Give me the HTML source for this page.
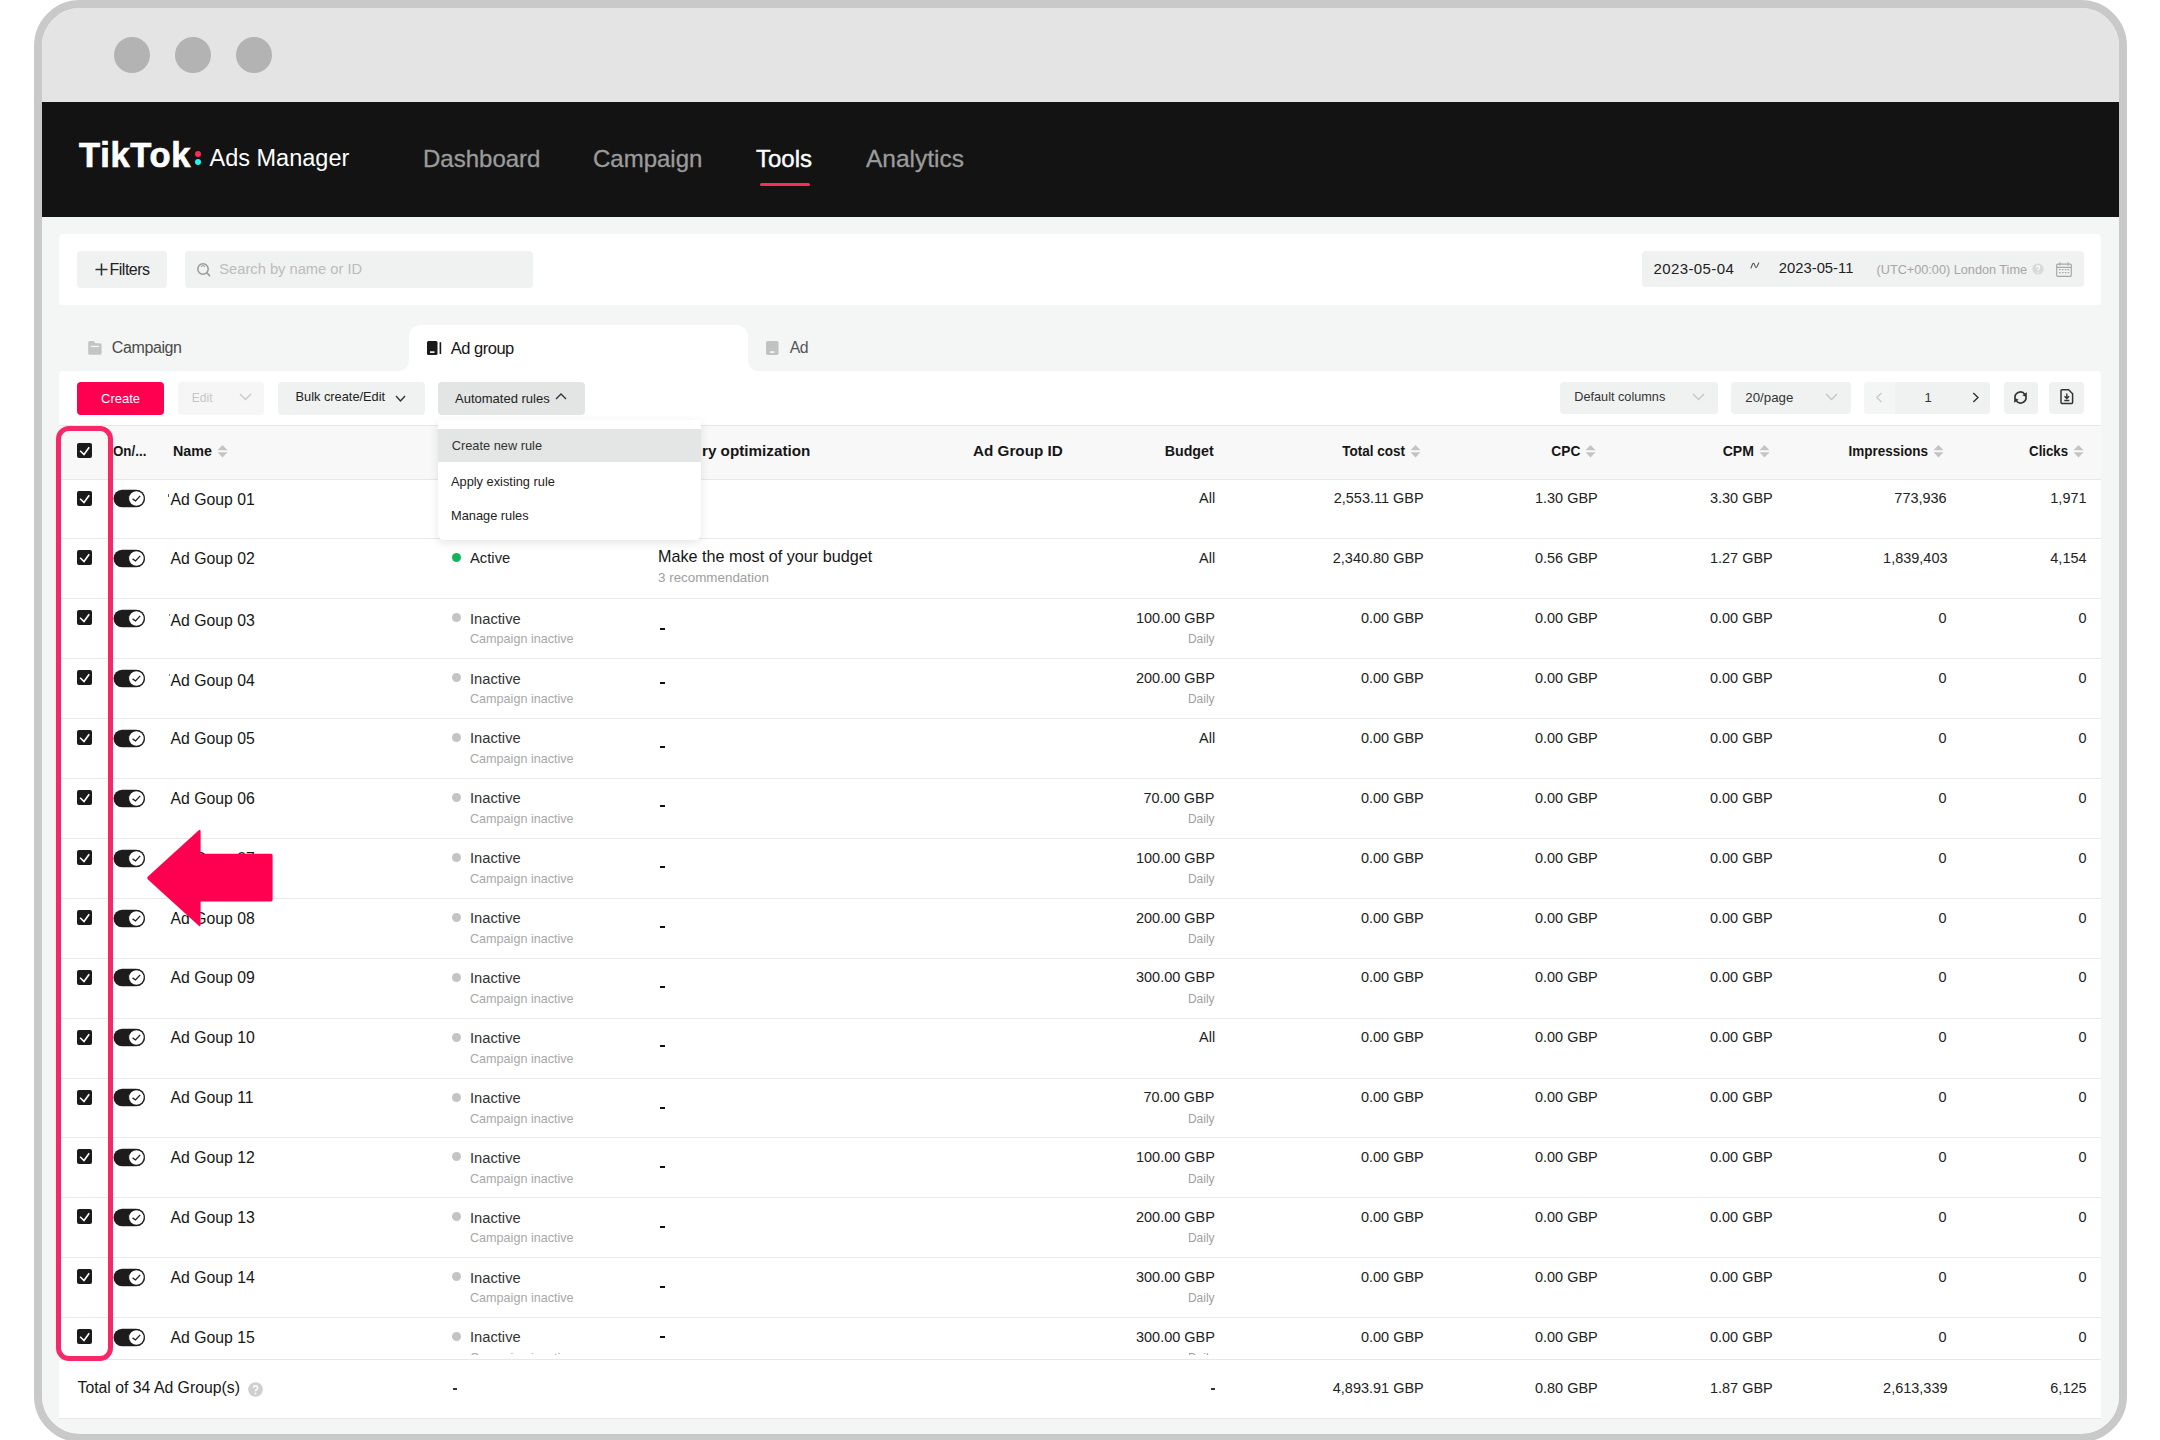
<!DOCTYPE html><html><head><meta charset="utf-8"><title>TikTok Ads Manager</title><style>
*{box-sizing:border-box}
html,body{margin:0;padding:0}
body{width:2160px;height:1440px;background:#fff;position:relative;overflow:hidden;font-family:"Liberation Sans",sans-serif;color:#161616}
.ab{position:absolute}
.t{position:absolute;white-space:nowrap;line-height:1}
.frame{position:absolute;left:34px;top:0;width:2093px;height:1442px;border:8px solid #c9c9c9;border-radius:46px;overflow:hidden;background:#f4f5f5}
.inner{position:absolute;left:-42px;top:-8px;width:2160px;height:1440px}
</style></head><body>
<div class="frame"><div class="inner">
<div class="ab" style="left:0.0px;top:0.0px;width:2160.0px;height:102.0px;background:#e4e4e4;border-radius:0px;"></div>
<div class="ab" style="left:114.0px;top:37.0px;width:36.0px;height:36.0px;background:#b3b3b3;border-radius:18px;"></div>
<div class="ab" style="left:175.0px;top:37.0px;width:36.0px;height:36.0px;background:#b3b3b3;border-radius:18px;"></div>
<div class="ab" style="left:236.0px;top:37.0px;width:36.0px;height:36.0px;background:#b3b3b3;border-radius:18px;"></div>
<div class="ab" style="left:0.0px;top:96.5px;width:2160.0px;height:1.0px;background:#e9e1de;border-radius:0px;"></div>
<div class="ab" style="left:0.0px;top:100.8px;width:2160.0px;height:1.2px;background:#dde6f2;border-radius:0px;"></div>
<div class="ab" style="left:0.0px;top:102.0px;width:2160.0px;height:115.0px;background:#131313;border-radius:0px;"></div>
<div class="t" style="left:79.0px;top:138.3px;font-size:34.5px;color:#fff;font-weight:700;letter-spacing:0.7px;-webkit-text-stroke:0.7px #fff">TikTok</div>
<div class="ab" style="left:195.4px;top:151.0px;width:5.6px;height:5.6px;background:#fe2c55;border-radius:3px;"></div>
<div class="ab" style="left:195.4px;top:159.0px;width:5.6px;height:5.6px;background:#25f4ee;border-radius:3px;"></div>
<div class="t" style="left:209.5px;top:147.0px;font-size:23.5px;color:#fff;font-weight:400;">Ads Manager</div>
<div class="t" style="left:423.0px;top:146.9px;font-size:24px;color:#9b9b9b;font-weight:400;-webkit-text-stroke:0.3px #9b9b9b">Dashboard</div>
<div class="t" style="left:593.0px;top:146.9px;font-size:24px;color:#9b9b9b;font-weight:400;-webkit-text-stroke:0.3px #9b9b9b">Campaign</div>
<div class="t" style="left:756.0px;top:146.9px;font-size:24px;color:#ffffff;font-weight:400;-webkit-text-stroke:0.4px #fff">Tools</div>
<div class="t" style="left:866.0px;top:146.5px;font-size:24.5px;color:#9b9b9b;font-weight:400;-webkit-text-stroke:0.3px #9b9b9b">Analytics</div>
<div class="ab" style="left:759.5px;top:182.5px;width:50.0px;height:3.5px;background:#fe2c55;border-radius:2px;"></div>
<div class="ab" style="left:42.0px;top:217.0px;width:2077.0px;height:1216.0px;background:#f4f5f5;border-radius:0px;"></div>
<div class="ab" style="left:59.0px;top:233.5px;width:2042.0px;height:71.5px;background:#ffffff;border-radius:4px;"></div>
<div class="ab" style="left:77.0px;top:251.0px;width:90.0px;height:37.0px;background:#f0f1f1;border-radius:4px;"></div>
<svg class="ab" style="left:95.0px;top:263.0px;" width="13" height="13" viewBox="0 0 13 13"><path d="M6.5 0.5V12.5M0.5 6.5H12.5" stroke="#333" stroke-width="1.6"/></svg>
<div class="t" style="left:109.5px;top:262.4px;font-size:16px;color:#222;font-weight:400;letter-spacing:-0.5px">Filters</div>
<div class="ab" style="left:185.0px;top:251.0px;width:348.0px;height:37.0px;background:#f0f1f1;border-radius:4px;"></div>
<svg class="ab" style="left:196.0px;top:262.0px;" width="16" height="16" viewBox="0 0 16 16"><circle cx="7" cy="7" r="5.2" fill="none" stroke="#9a9a9a" stroke-width="1.5"/><path d="M10.8 10.8L13.6 13.6" stroke="#9a9a9a" stroke-width="1.5" stroke-linecap="round"/><path d="M5 4.6A2.8 2.8 0 0 1 9 4.6" stroke="#9a9a9a" stroke-width="1.2" fill="none"/></svg>
<div class="t" style="left:219.3px;top:262.1px;font-size:14.7px;color:#bcbcbc;font-weight:400;">Search by name or ID</div>
<div class="ab" style="left:1641.5px;top:251.2px;width:442.5px;height:36.3px;background:#f0f1f1;border-radius:4px;"></div>
<div class="t" style="left:1653.5px;top:261.1px;font-size:15px;color:#222;font-weight:400;letter-spacing:0.4px">2023-05-04</div>
<svg class="ab" style="left:1750.0px;top:262.0px;" width="10" height="7" viewBox="0 0 10 7"><path d="M1 6C2.2 2.6 2.9 1 3.7 1.3C4.6 1.7 5.1 5.6 6.1 5.6C7 5.6 7.9 2.4 8.8 1" fill="none" stroke="#555" stroke-width="1.1" stroke-linecap="round"/></svg>
<div class="t" style="left:1778.8px;top:261.2px;font-size:14.8px;color:#222;font-weight:400;">2023-05-11</div>
<div class="t" style="left:1876.5px;top:263.5px;font-size:12.7px;color:#a6a6a6;font-weight:400;">(UTC+00:00) London Time</div>
<svg class="ab" style="left:2032.0px;top:263.0px;" width="12" height="12" viewBox="0 0 12 12"><circle cx="6" cy="6" r="5.6" fill="#d9d9d9"/><path d="M4.3 4.6A1.7 1.7 0 1 1 6.6 6.2C6.1 6.5 6 6.8 6 7.4" stroke="#fff" stroke-width="1.2" fill="none"/><circle cx="6" cy="9.2" r="0.7" fill="#fff"/></svg>
<svg class="ab" style="left:2056.0px;top:262.0px;" width="16" height="15" viewBox="0 0 16 15"><rect x="0.7" y="2.2" width="14.6" height="12.1" rx="1" fill="none" stroke="#a8a8a8" stroke-width="1.2"/><path d="M0.7 5.3H15.3M4 0.3V3.5M12 0.3V3.5" stroke="#a8a8a8" stroke-width="1.2"/><g fill="#a8a8a8"><rect x="3" y="7" width="1.6" height="1.3"/><rect x="5.9" y="7" width="1.6" height="1.3"/><rect x="8.8" y="7" width="1.6" height="1.3"/><rect x="11.6" y="7" width="1.6" height="1.3"/><rect x="3" y="10" width="1.6" height="1.3"/><rect x="5.9" y="10" width="1.6" height="1.3"/><rect x="8.8" y="10" width="1.6" height="1.3"/><rect x="11.6" y="10" width="1.6" height="1.3"/></g></svg>
<svg class="ab" style="left:88.0px;top:341.0px;" width="14" height="14" viewBox="0 0 14 14"><path d="M0.2 1.6Q0.2 0.1 1.7 0.1H5.2Q6.2 0.1 6.9 1.2L7.3 2.2H12.1Q13.6 2.2 13.6 3.7V12.2Q13.6 13.7 12.1 13.7H1.7Q0.2 13.7 0.2 12.2Z" fill="#c4c4c4"/><rect x="2.8" y="4.8" width="8.1" height="1.3" fill="#f4f5f5"/></svg>
<div class="t" style="left:111.8px;top:339.9px;font-size:16px;color:#4a4a4a;font-weight:400;letter-spacing:-0.4px">Campaign</div>
<div class="ab" style="left:409.0px;top:325.0px;width:339.0px;height:48.0px;background:#ffffff;border-radius:0px;border-radius:12px 12px 0 0"></div>
<svg class="ab" style="left:397.0px;top:359.0px;" width="12" height="12" viewBox="0 0 12 12"><path d="M12 0V12H0Q12 12 12 0Z" fill="#fff"/></svg>
<svg class="ab" style="left:748.0px;top:359.0px;" width="12" height="12" viewBox="0 0 12 12"><path d="M0 0V12H12Q0 12 0 0Z" fill="#fff"/></svg>
<svg class="ab" style="left:427.0px;top:341.0px;" width="15" height="14" viewBox="0 0 15 14"><rect x="0" y="0" width="10.5" height="14" rx="1.5" fill="#1a1a1a"/><rect x="3" y="10.3" width="4.5" height="1.6" fill="#fff"/><rect x="12.6" y="1.2" width="1.6" height="11.8" fill="#1a1a1a"/></svg>
<div class="t" style="left:450.8px;top:339.6px;font-size:16.5px;color:#161616;font-weight:400;letter-spacing:-0.5px">Ad group</div>
<svg class="ab" style="left:766.0px;top:341.0px;" width="13" height="14" viewBox="0 0 13 14"><rect x="0" y="0" width="12.5" height="14" rx="1.8" fill="#c2c2c2"/><rect x="4" y="10.3" width="4.5" height="1.6" fill="#f4f5f5"/></svg>
<div class="t" style="left:789.7px;top:340.2px;font-size:15.8px;color:#555;font-weight:400;letter-spacing:-0.5px">Ad</div>
<div class="ab" style="left:59.0px;top:371.0px;width:2042.0px;height:1047.0px;background:#ffffff;border-radius:4px;"></div>
<div class="ab" style="left:77.0px;top:382.0px;width:87.0px;height:32.5px;background:#ff0050;border-radius:4px;"></div>
<div class="t" style="left:101.0px;top:391.9px;font-size:13px;color:#fff;font-weight:400;">Create</div>
<div class="ab" style="left:177.5px;top:382.0px;width:86.0px;height:32.5px;background:#f6f6f6;border-radius:4px;"></div>
<div class="t" style="left:191.8px;top:392.0px;font-size:12px;color:#c6c6c6;font-weight:400;">Edit</div>
<svg class="ab" style="left:239.0px;top:393.0px;" width="13" height="8" viewBox="0 0 13 8"><path d="M1 1L6.5 6.5L12 1" fill="none" stroke="#c8c8c8" stroke-width="1.3"/></svg>
<div class="ab" style="left:277.5px;top:382.0px;width:147.0px;height:32.5px;background:#f0f1f1;border-radius:4px;"></div>
<div class="t" style="left:295.5px;top:391.4px;font-size:12.8px;color:#222;font-weight:400;">Bulk create/Edit</div>
<svg class="ab" style="left:395.0px;top:395.0px;" width="11" height="8" viewBox="0 0 11 8"><path d="M1 1L5.5 6L10 1" fill="none" stroke="#333" stroke-width="1.4"/></svg>
<div class="ab" style="left:437.5px;top:382.0px;width:147.5px;height:32.5px;background:#e3e4e4;border-radius:4px;"></div>
<div class="t" style="left:455.0px;top:391.9px;font-size:13px;color:#222;font-weight:400;">Automated rules</div>
<svg class="ab" style="left:555.0px;top:392.0px;" width="12" height="8" viewBox="0 0 12 8"><path d="M1 7L6 2L11 7" fill="none" stroke="#333" stroke-width="1.4"/></svg>
<div class="ab" style="left:1560.0px;top:382.0px;width:157.5px;height:32.0px;background:#f0f1f1;border-radius:4px;"></div>
<div class="t" style="left:1574.3px;top:391.0px;font-size:12.7px;color:#333;font-weight:400;">Default columns</div>
<svg class="ab" style="left:1692.0px;top:393.0px;" width="13" height="8" viewBox="0 0 13 8"><path d="M1 1L6.5 6.5L12 1" fill="none" stroke="#c4c4c4" stroke-width="1.3"/></svg>
<div class="ab" style="left:1731.0px;top:382.0px;width:119.5px;height:32.0px;background:#f0f1f1;border-radius:4px;"></div>
<div class="t" style="left:1745.3px;top:390.5px;font-size:13.3px;color:#333;font-weight:400;">20/page</div>
<svg class="ab" style="left:1825.0px;top:393.0px;" width="13" height="8" viewBox="0 0 13 8"><path d="M1 1L6.5 6.5L12 1" fill="none" stroke="#c4c4c4" stroke-width="1.3"/></svg>
<div class="ab" style="left:1864.0px;top:382.0px;width:126.0px;height:32.0px;background:#f0f1f1;border-radius:4px;"></div>
<div class="ab" style="left:1864.0px;top:382.0px;width:31.0px;height:32.0px;background:#f4f5f5;border-radius:0px;border-radius:4px 0 0 4px"></div>
<svg class="ab" style="left:1875.0px;top:392.3px;" width="8" height="12" viewBox="0 0 8 12"><path d="M6.5 1L1.8 5.5L6.5 10" fill="none" stroke="#c8c8c8" stroke-width="1.3"/></svg>
<div class="t" style="left:1924.5px;top:390.8px;font-size:13px;color:#333;font-weight:400;">1</div>
<svg class="ab" style="left:1971.5px;top:392.3px;" width="8" height="12" viewBox="0 0 8 12"><path d="M1.3 1L6 5.5L1.3 10" fill="none" stroke="#333" stroke-width="1.4"/></svg>
<div class="ab" style="left:2004.0px;top:382.0px;width:34.0px;height:32.0px;background:#f0f1f1;border-radius:4px;"></div>
<svg class="ab" style="left:2013.0px;top:390.0px;" width="15" height="15" viewBox="0 0 15 15"><path d="M2.2 8.8A5.4 5.4 0 0 1 11.9 4.4" fill="none" stroke="#333" stroke-width="1.6"/><path d="M13.9 2.2L13.7 7.2L9.3 5.2Z" fill="#333"/><path d="M12.8 6.2A5.4 5.4 0 0 1 3.1 10.6" fill="none" stroke="#333" stroke-width="1.6"/><path d="M1.1 12.8L1.3 7.8L5.7 9.8Z" fill="#333"/></svg>
<div class="ab" style="left:2049.0px;top:382.0px;width:35.0px;height:32.0px;background:#f0f1f1;border-radius:4px;"></div>
<svg class="ab" style="left:2059.5px;top:389.2px;" width="14" height="16" viewBox="0 0 14 16"><path d="M1 1.8Q1 0.8 2 0.8H8.6L12.6 4.8V13.6Q12.6 14.6 11.6 14.6H2Q1 14.6 1 13.6Z" fill="none" stroke="#333" stroke-width="1.5"/><path d="M6.8 4.4V9.4M4.5 7.3L6.8 9.6L9.1 7.3M4.3 11.5H9.3" fill="none" stroke="#333" stroke-width="1.4"/></svg>
<div class="ab" style="left:59.0px;top:425.0px;width:2042.0px;height:1.0px;background:#e6e8e8;border-radius:0px;"></div>
<div class="ab" style="left:59.0px;top:426.0px;width:2042.0px;height:52.5px;background:#f8f8f8;border-radius:0px;"></div>
<div class="ab" style="left:59.0px;top:478.5px;width:2042.0px;height:1.0px;background:#e6e8e8;border-radius:0px;"></div>
<svg class="ab" style="left:77.0px;top:443.0px;" width="15" height="15" viewBox="0 0 15 15"><rect width="15" height="15" rx="2" fill="#1a1a1a"/><path d="M3.1 7.7L7 11.5L12.2 4.2" fill="none" stroke="#fff" stroke-width="1.6"/></svg>
<div class="t" style="left:113.0px;top:443.4px;font-size:15.3px;color:#161616;font-weight:700;transform:scaleX(0.8717);transform-origin:0 0">On/...</div>
<div class="t" style="left:173.0px;top:443.4px;font-size:15.3px;color:#161616;font-weight:700;transform:scaleX(0.9353);transform-origin:0 0">Name</div>
<svg class="ab" style="left:217.0px;top:445.0px;" width="11" height="13" viewBox="0 0 11 13"><path d="M5.5 0L10.5 5.2H0.5Z" fill="#c4c4c4"/><path d="M5.5 12.5L10.5 7.3H0.5Z" fill="#c4c4c4"/></svg>
<div class="t" style="left:702.4px;top:443.4px;font-size:15.3px;color:#161616;font-weight:700;transform:scaleX(0.9954);transform-origin:0 0">ry optimization</div>
<div class="t" style="left:973.0px;top:443.4px;font-size:15.3px;color:#161616;font-weight:700;transform:scaleX(0.9967);transform-origin:0 0">Ad Group ID</div>
<div class="t" style="right:946.0px;top:443.4px;font-size:15.3px;color:#161616;font-weight:700;transform:scaleX(0.9298);transform-origin:100% 0">Budget</div>
<div class="t" style="right:754.5px;top:443.4px;font-size:15.3px;color:#161616;font-weight:700;transform:scaleX(0.8833);transform-origin:100% 0">Total cost</div>
<svg class="ab" style="left:1410.0px;top:445.0px;" width="11" height="13" viewBox="0 0 11 13"><path d="M5.5 0L10.5 5.2H0.5Z" fill="#c4c4c4"/><path d="M5.5 12.5L10.5 7.3H0.5Z" fill="#c4c4c4"/></svg>
<div class="t" style="right:580.2px;top:443.4px;font-size:15.3px;color:#161616;font-weight:700;transform:scaleX(0.8978);transform-origin:100% 0">CPC</div>
<svg class="ab" style="left:1584.5px;top:445.0px;" width="11" height="13" viewBox="0 0 11 13"><path d="M5.5 0L10.5 5.2H0.5Z" fill="#c4c4c4"/><path d="M5.5 12.5L10.5 7.3H0.5Z" fill="#c4c4c4"/></svg>
<div class="t" style="right:405.7px;top:443.4px;font-size:15.3px;color:#161616;font-weight:700;transform:scaleX(0.9206);transform-origin:100% 0">CPM</div>
<svg class="ab" style="left:1759.0px;top:445.0px;" width="11" height="13" viewBox="0 0 11 13"><path d="M5.5 0L10.5 5.2H0.5Z" fill="#c4c4c4"/><path d="M5.5 12.5L10.5 7.3H0.5Z" fill="#c4c4c4"/></svg>
<div class="t" style="right:231.5px;top:443.4px;font-size:15.3px;color:#161616;font-weight:700;transform:scaleX(0.8835);transform-origin:100% 0">Impressions</div>
<svg class="ab" style="left:1933.0px;top:445.0px;" width="11" height="13" viewBox="0 0 11 13"><path d="M5.5 0L10.5 5.2H0.5Z" fill="#c4c4c4"/><path d="M5.5 12.5L10.5 7.3H0.5Z" fill="#c4c4c4"/></svg>
<div class="t" style="right:92.0px;top:443.4px;font-size:15.3px;color:#161616;font-weight:700;transform:scaleX(0.8647);transform-origin:100% 0">Clicks</div>
<svg class="ab" style="left:2073.0px;top:445.0px;" width="11" height="13" viewBox="0 0 11 13"><path d="M5.5 0L10.5 5.2H0.5Z" fill="#c4c4c4"/><path d="M5.5 12.5L10.5 7.3H0.5Z" fill="#c4c4c4"/></svg>
<svg class="ab" style="left:77.0px;top:490.5px;" width="15" height="15" viewBox="0 0 15 15"><rect width="15" height="15" rx="2" fill="#1a1a1a"/><path d="M3.1 7.7L7 11.5L12.2 4.2" fill="none" stroke="#fff" stroke-width="1.6"/></svg>
<svg class="ab" style="left:112.5px;top:489.2px;" width="33" height="19" viewBox="0 0 33 19"><rect x="0.5" y="0.8" width="31.5" height="17.4" rx="8.7" fill="#1c1c1c"/><circle cx="23.4" cy="9.5" r="7.85" fill="#fff" stroke="#1c1c1c" stroke-width="1.1"/><path d="M19.6 9.9L22.5 12L27.2 6.9" fill="none" stroke="#1c1c1c" stroke-width="1.3"/></svg>
<div class="t" style="left:170.5px;top:491.8px;font-size:15.8px;color:#161616;font-weight:400;">Ad Goup 01</div>
<div class="t" style="right:945.4px;top:490.2px;font-size:15.4px;color:#222;font-weight:400;transform:scaleX(0.94);transform-origin:100% 0">All</div>
<div class="t" style="right:736.0px;top:490.2px;font-size:15.4px;color:#222;font-weight:400;transform:scaleX(0.94);transform-origin:100% 0">2,553.11 GBP</div>
<div class="t" style="right:562.0px;top:490.2px;font-size:15.4px;color:#222;font-weight:400;transform:scaleX(0.94);transform-origin:100% 0">1.30 GBP</div>
<div class="t" style="right:387.5px;top:490.2px;font-size:15.4px;color:#222;font-weight:400;transform:scaleX(0.94);transform-origin:100% 0">3.30 GBP</div>
<div class="t" style="right:213.0px;top:490.2px;font-size:15.4px;color:#222;font-weight:400;transform:scaleX(0.94);transform-origin:100% 0">773,936</div>
<div class="t" style="right:73.0px;top:490.2px;font-size:15.4px;color:#222;font-weight:400;transform:scaleX(0.94);transform-origin:100% 0">1,971</div>
<div class="ab" style="left:59.0px;top:538.4px;width:2042.0px;height:1.0px;background:#e8eaea;border-radius:0px;"></div>
<svg class="ab" style="left:77.0px;top:550.4px;" width="15" height="15" viewBox="0 0 15 15"><rect width="15" height="15" rx="2" fill="#1a1a1a"/><path d="M3.1 7.7L7 11.5L12.2 4.2" fill="none" stroke="#fff" stroke-width="1.6"/></svg>
<svg class="ab" style="left:112.5px;top:549.1px;" width="33" height="19" viewBox="0 0 33 19"><rect x="0.5" y="0.8" width="31.5" height="17.4" rx="8.7" fill="#1c1c1c"/><circle cx="23.4" cy="9.5" r="7.85" fill="#fff" stroke="#1c1c1c" stroke-width="1.1"/><path d="M19.6 9.9L22.5 12L27.2 6.9" fill="none" stroke="#1c1c1c" stroke-width="1.3"/></svg>
<div class="t" style="left:170.5px;top:550.8px;font-size:15.8px;color:#161616;font-weight:400;">Ad Goup 02</div>
<div class="ab" style="left:451.8px;top:553.4px;width:9.0px;height:9.0px;background:#12b45a;border-radius:5px;"></div>
<div class="t" style="left:469.8px;top:550.1px;font-size:15.4px;color:#222;font-weight:400;transform:scaleX(0.96);transform-origin:0 0">Active</div>
<div class="t" style="left:658.0px;top:547.6px;font-size:16.2px;color:#161616;font-weight:400;">Make the most of your budget</div>
<div class="t" style="left:658.0px;top:570.8px;font-size:13.4px;color:#9e9e9e;font-weight:400;">3 recommendation</div>
<div class="t" style="right:945.4px;top:550.1px;font-size:15.4px;color:#222;font-weight:400;transform:scaleX(0.94);transform-origin:100% 0">All</div>
<div class="t" style="right:736.0px;top:550.1px;font-size:15.4px;color:#222;font-weight:400;transform:scaleX(0.94);transform-origin:100% 0">2,340.80 GBP</div>
<div class="t" style="right:562.0px;top:550.1px;font-size:15.4px;color:#222;font-weight:400;transform:scaleX(0.94);transform-origin:100% 0">0.56 GBP</div>
<div class="t" style="right:387.5px;top:550.1px;font-size:15.4px;color:#222;font-weight:400;transform:scaleX(0.94);transform-origin:100% 0">1.27 GBP</div>
<div class="t" style="right:213.0px;top:550.1px;font-size:15.4px;color:#222;font-weight:400;transform:scaleX(0.94);transform-origin:100% 0">1,839,403</div>
<div class="t" style="right:73.0px;top:550.1px;font-size:15.4px;color:#222;font-weight:400;transform:scaleX(0.94);transform-origin:100% 0">4,154</div>
<div class="ab" style="left:59.0px;top:598.3px;width:2042.0px;height:1.0px;background:#e8eaea;border-radius:0px;"></div>
<svg class="ab" style="left:77.0px;top:610.3px;" width="15" height="15" viewBox="0 0 15 15"><rect width="15" height="15" rx="2" fill="#1a1a1a"/><path d="M3.1 7.7L7 11.5L12.2 4.2" fill="none" stroke="#fff" stroke-width="1.6"/></svg>
<svg class="ab" style="left:112.5px;top:609.0px;" width="33" height="19" viewBox="0 0 33 19"><rect x="0.5" y="0.8" width="31.5" height="17.4" rx="8.7" fill="#1c1c1c"/><circle cx="23.4" cy="9.5" r="7.85" fill="#fff" stroke="#1c1c1c" stroke-width="1.1"/><path d="M19.6 9.9L22.5 12L27.2 6.9" fill="none" stroke="#1c1c1c" stroke-width="1.3"/></svg>
<div class="t" style="left:170.5px;top:612.6px;font-size:15.8px;color:#161616;font-weight:400;">Ad Goup 03</div>
<div class="ab" style="left:451.8px;top:613.3px;width:9.0px;height:9.0px;background:#c4c4c4;border-radius:5px;"></div>
<div class="t" style="left:469.8px;top:610.6px;font-size:15.4px;color:#333;font-weight:400;transform:scaleX(0.955);transform-origin:0 0">Inactive</div>
<div class="t" style="left:470.0px;top:633.4px;font-size:12.6px;color:#a8a8a8;font-weight:400;">Campaign inactive</div>
<div class="ab" style="left:659.5px;top:627.9px;width:5.0px;height:2.0px;background:#111;border-radius:0px;"></div>
<div class="t" style="right:945.4px;top:610.0px;font-size:15.4px;color:#222;font-weight:400;transform:scaleX(0.94);transform-origin:100% 0">100.00 GBP</div>
<div class="t" style="right:945.4px;top:633.4px;font-size:12px;color:#a0a0a0;font-weight:400;">Daily</div>
<div class="t" style="right:736.0px;top:610.0px;font-size:15.4px;color:#222;font-weight:400;transform:scaleX(0.94);transform-origin:100% 0">0.00 GBP</div>
<div class="t" style="right:562.0px;top:610.0px;font-size:15.4px;color:#222;font-weight:400;transform:scaleX(0.94);transform-origin:100% 0">0.00 GBP</div>
<div class="t" style="right:387.5px;top:610.0px;font-size:15.4px;color:#222;font-weight:400;transform:scaleX(0.94);transform-origin:100% 0">0.00 GBP</div>
<div class="t" style="right:213.0px;top:610.0px;font-size:15.4px;color:#222;font-weight:400;transform:scaleX(0.94);transform-origin:100% 0">0</div>
<div class="t" style="right:73.0px;top:610.0px;font-size:15.4px;color:#222;font-weight:400;transform:scaleX(0.94);transform-origin:100% 0">0</div>
<div class="ab" style="left:59.0px;top:658.2px;width:2042.0px;height:1.0px;background:#e8eaea;border-radius:0px;"></div>
<svg class="ab" style="left:77.0px;top:670.2px;" width="15" height="15" viewBox="0 0 15 15"><rect width="15" height="15" rx="2" fill="#1a1a1a"/><path d="M3.1 7.7L7 11.5L12.2 4.2" fill="none" stroke="#fff" stroke-width="1.6"/></svg>
<svg class="ab" style="left:112.5px;top:668.9px;" width="33" height="19" viewBox="0 0 33 19"><rect x="0.5" y="0.8" width="31.5" height="17.4" rx="8.7" fill="#1c1c1c"/><circle cx="23.4" cy="9.5" r="7.85" fill="#fff" stroke="#1c1c1c" stroke-width="1.1"/><path d="M19.6 9.9L22.5 12L27.2 6.9" fill="none" stroke="#1c1c1c" stroke-width="1.3"/></svg>
<div class="t" style="left:170.5px;top:673.3px;font-size:15.8px;color:#161616;font-weight:400;">Ad Goup 04</div>
<div class="ab" style="left:451.8px;top:673.2px;width:9.0px;height:9.0px;background:#c4c4c4;border-radius:5px;"></div>
<div class="t" style="left:469.8px;top:670.5px;font-size:15.4px;color:#333;font-weight:400;transform:scaleX(0.955);transform-origin:0 0">Inactive</div>
<div class="t" style="left:470.0px;top:693.3px;font-size:12.6px;color:#a8a8a8;font-weight:400;">Campaign inactive</div>
<div class="ab" style="left:659.5px;top:682.0px;width:5.0px;height:2.0px;background:#111;border-radius:0px;"></div>
<div class="t" style="right:945.4px;top:669.9px;font-size:15.4px;color:#222;font-weight:400;transform:scaleX(0.94);transform-origin:100% 0">200.00 GBP</div>
<div class="t" style="right:945.4px;top:693.3px;font-size:12px;color:#a0a0a0;font-weight:400;">Daily</div>
<div class="t" style="right:736.0px;top:669.9px;font-size:15.4px;color:#222;font-weight:400;transform:scaleX(0.94);transform-origin:100% 0">0.00 GBP</div>
<div class="t" style="right:562.0px;top:669.9px;font-size:15.4px;color:#222;font-weight:400;transform:scaleX(0.94);transform-origin:100% 0">0.00 GBP</div>
<div class="t" style="right:387.5px;top:669.9px;font-size:15.4px;color:#222;font-weight:400;transform:scaleX(0.94);transform-origin:100% 0">0.00 GBP</div>
<div class="t" style="right:213.0px;top:669.9px;font-size:15.4px;color:#222;font-weight:400;transform:scaleX(0.94);transform-origin:100% 0">0</div>
<div class="t" style="right:73.0px;top:669.9px;font-size:15.4px;color:#222;font-weight:400;transform:scaleX(0.94);transform-origin:100% 0">0</div>
<div class="ab" style="left:59.0px;top:718.1px;width:2042.0px;height:1.0px;background:#e8eaea;border-radius:0px;"></div>
<svg class="ab" style="left:77.0px;top:730.1px;" width="15" height="15" viewBox="0 0 15 15"><rect width="15" height="15" rx="2" fill="#1a1a1a"/><path d="M3.1 7.7L7 11.5L12.2 4.2" fill="none" stroke="#fff" stroke-width="1.6"/></svg>
<svg class="ab" style="left:112.5px;top:728.8px;" width="33" height="19" viewBox="0 0 33 19"><rect x="0.5" y="0.8" width="31.5" height="17.4" rx="8.7" fill="#1c1c1c"/><circle cx="23.4" cy="9.5" r="7.85" fill="#fff" stroke="#1c1c1c" stroke-width="1.1"/><path d="M19.6 9.9L22.5 12L27.2 6.9" fill="none" stroke="#1c1c1c" stroke-width="1.3"/></svg>
<div class="t" style="left:170.5px;top:731.0px;font-size:15.8px;color:#161616;font-weight:400;">Ad Goup 05</div>
<div class="ab" style="left:451.8px;top:733.1px;width:9.0px;height:9.0px;background:#c4c4c4;border-radius:5px;"></div>
<div class="t" style="left:469.8px;top:730.4px;font-size:15.4px;color:#333;font-weight:400;transform:scaleX(0.955);transform-origin:0 0">Inactive</div>
<div class="t" style="left:470.0px;top:753.2px;font-size:12.6px;color:#a8a8a8;font-weight:400;">Campaign inactive</div>
<div class="ab" style="left:659.5px;top:746.0px;width:5.0px;height:2.0px;background:#111;border-radius:0px;"></div>
<div class="t" style="right:945.4px;top:729.8px;font-size:15.4px;color:#222;font-weight:400;transform:scaleX(0.94);transform-origin:100% 0">All</div>
<div class="t" style="right:736.0px;top:729.8px;font-size:15.4px;color:#222;font-weight:400;transform:scaleX(0.94);transform-origin:100% 0">0.00 GBP</div>
<div class="t" style="right:562.0px;top:729.8px;font-size:15.4px;color:#222;font-weight:400;transform:scaleX(0.94);transform-origin:100% 0">0.00 GBP</div>
<div class="t" style="right:387.5px;top:729.8px;font-size:15.4px;color:#222;font-weight:400;transform:scaleX(0.94);transform-origin:100% 0">0.00 GBP</div>
<div class="t" style="right:213.0px;top:729.8px;font-size:15.4px;color:#222;font-weight:400;transform:scaleX(0.94);transform-origin:100% 0">0</div>
<div class="t" style="right:73.0px;top:729.8px;font-size:15.4px;color:#222;font-weight:400;transform:scaleX(0.94);transform-origin:100% 0">0</div>
<div class="ab" style="left:59.0px;top:778.0px;width:2042.0px;height:1.0px;background:#e8eaea;border-radius:0px;"></div>
<svg class="ab" style="left:77.0px;top:790.0px;" width="15" height="15" viewBox="0 0 15 15"><rect width="15" height="15" rx="2" fill="#1a1a1a"/><path d="M3.1 7.7L7 11.5L12.2 4.2" fill="none" stroke="#fff" stroke-width="1.6"/></svg>
<svg class="ab" style="left:112.5px;top:788.7px;" width="33" height="19" viewBox="0 0 33 19"><rect x="0.5" y="0.8" width="31.5" height="17.4" rx="8.7" fill="#1c1c1c"/><circle cx="23.4" cy="9.5" r="7.85" fill="#fff" stroke="#1c1c1c" stroke-width="1.1"/><path d="M19.6 9.9L22.5 12L27.2 6.9" fill="none" stroke="#1c1c1c" stroke-width="1.3"/></svg>
<div class="t" style="left:170.5px;top:791.2px;font-size:15.8px;color:#161616;font-weight:400;">Ad Goup 06</div>
<div class="ab" style="left:451.8px;top:793.0px;width:9.0px;height:9.0px;background:#c4c4c4;border-radius:5px;"></div>
<div class="t" style="left:469.8px;top:790.3px;font-size:15.4px;color:#333;font-weight:400;transform:scaleX(0.955);transform-origin:0 0">Inactive</div>
<div class="t" style="left:470.0px;top:813.1px;font-size:12.6px;color:#a8a8a8;font-weight:400;">Campaign inactive</div>
<div class="ab" style="left:659.5px;top:805.3px;width:5.0px;height:2.0px;background:#111;border-radius:0px;"></div>
<div class="t" style="right:945.4px;top:789.7px;font-size:15.4px;color:#222;font-weight:400;transform:scaleX(0.94);transform-origin:100% 0">70.00 GBP</div>
<div class="t" style="right:945.4px;top:813.1px;font-size:12px;color:#a0a0a0;font-weight:400;">Daily</div>
<div class="t" style="right:736.0px;top:789.7px;font-size:15.4px;color:#222;font-weight:400;transform:scaleX(0.94);transform-origin:100% 0">0.00 GBP</div>
<div class="t" style="right:562.0px;top:789.7px;font-size:15.4px;color:#222;font-weight:400;transform:scaleX(0.94);transform-origin:100% 0">0.00 GBP</div>
<div class="t" style="right:387.5px;top:789.7px;font-size:15.4px;color:#222;font-weight:400;transform:scaleX(0.94);transform-origin:100% 0">0.00 GBP</div>
<div class="t" style="right:213.0px;top:789.7px;font-size:15.4px;color:#222;font-weight:400;transform:scaleX(0.94);transform-origin:100% 0">0</div>
<div class="t" style="right:73.0px;top:789.7px;font-size:15.4px;color:#222;font-weight:400;transform:scaleX(0.94);transform-origin:100% 0">0</div>
<div class="ab" style="left:59.0px;top:837.9px;width:2042.0px;height:1.0px;background:#e8eaea;border-radius:0px;"></div>
<svg class="ab" style="left:77.0px;top:849.9px;" width="15" height="15" viewBox="0 0 15 15"><rect width="15" height="15" rx="2" fill="#1a1a1a"/><path d="M3.1 7.7L7 11.5L12.2 4.2" fill="none" stroke="#fff" stroke-width="1.6"/></svg>
<svg class="ab" style="left:112.5px;top:848.6px;" width="33" height="19" viewBox="0 0 33 19"><rect x="0.5" y="0.8" width="31.5" height="17.4" rx="8.7" fill="#1c1c1c"/><circle cx="23.4" cy="9.5" r="7.85" fill="#fff" stroke="#1c1c1c" stroke-width="1.1"/><path d="M19.6 9.9L22.5 12L27.2 6.9" fill="none" stroke="#1c1c1c" stroke-width="1.3"/></svg>
<div class="t" style="left:170.5px;top:850.7px;font-size:15.8px;color:#161616;font-weight:400;">Ad Goup 07</div>
<div class="ab" style="left:451.8px;top:852.9px;width:9.0px;height:9.0px;background:#c4c4c4;border-radius:5px;"></div>
<div class="t" style="left:469.8px;top:850.2px;font-size:15.4px;color:#333;font-weight:400;transform:scaleX(0.955);transform-origin:0 0">Inactive</div>
<div class="t" style="left:470.0px;top:873.0px;font-size:12.6px;color:#a8a8a8;font-weight:400;">Campaign inactive</div>
<div class="ab" style="left:659.5px;top:866.1px;width:5.0px;height:2.0px;background:#111;border-radius:0px;"></div>
<div class="t" style="right:945.4px;top:849.6px;font-size:15.4px;color:#222;font-weight:400;transform:scaleX(0.94);transform-origin:100% 0">100.00 GBP</div>
<div class="t" style="right:945.4px;top:873.0px;font-size:12px;color:#a0a0a0;font-weight:400;">Daily</div>
<div class="t" style="right:736.0px;top:849.6px;font-size:15.4px;color:#222;font-weight:400;transform:scaleX(0.94);transform-origin:100% 0">0.00 GBP</div>
<div class="t" style="right:562.0px;top:849.6px;font-size:15.4px;color:#222;font-weight:400;transform:scaleX(0.94);transform-origin:100% 0">0.00 GBP</div>
<div class="t" style="right:387.5px;top:849.6px;font-size:15.4px;color:#222;font-weight:400;transform:scaleX(0.94);transform-origin:100% 0">0.00 GBP</div>
<div class="t" style="right:213.0px;top:849.6px;font-size:15.4px;color:#222;font-weight:400;transform:scaleX(0.94);transform-origin:100% 0">0</div>
<div class="t" style="right:73.0px;top:849.6px;font-size:15.4px;color:#222;font-weight:400;transform:scaleX(0.94);transform-origin:100% 0">0</div>
<div class="ab" style="left:59.0px;top:897.8px;width:2042.0px;height:1.0px;background:#e8eaea;border-radius:0px;"></div>
<svg class="ab" style="left:77.0px;top:909.8px;" width="15" height="15" viewBox="0 0 15 15"><rect width="15" height="15" rx="2" fill="#1a1a1a"/><path d="M3.1 7.7L7 11.5L12.2 4.2" fill="none" stroke="#fff" stroke-width="1.6"/></svg>
<svg class="ab" style="left:112.5px;top:908.5px;" width="33" height="19" viewBox="0 0 33 19"><rect x="0.5" y="0.8" width="31.5" height="17.4" rx="8.7" fill="#1c1c1c"/><circle cx="23.4" cy="9.5" r="7.85" fill="#fff" stroke="#1c1c1c" stroke-width="1.1"/><path d="M19.6 9.9L22.5 12L27.2 6.9" fill="none" stroke="#1c1c1c" stroke-width="1.3"/></svg>
<div class="t" style="left:170.5px;top:910.5px;font-size:15.8px;color:#161616;font-weight:400;">Ad Goup 08</div>
<div class="ab" style="left:451.8px;top:912.8px;width:9.0px;height:9.0px;background:#c4c4c4;border-radius:5px;"></div>
<div class="t" style="left:469.8px;top:910.1px;font-size:15.4px;color:#333;font-weight:400;transform:scaleX(0.955);transform-origin:0 0">Inactive</div>
<div class="t" style="left:470.0px;top:932.9px;font-size:12.6px;color:#a8a8a8;font-weight:400;">Campaign inactive</div>
<div class="ab" style="left:659.5px;top:926.3px;width:5.0px;height:2.0px;background:#111;border-radius:0px;"></div>
<div class="t" style="right:945.4px;top:909.5px;font-size:15.4px;color:#222;font-weight:400;transform:scaleX(0.94);transform-origin:100% 0">200.00 GBP</div>
<div class="t" style="right:945.4px;top:932.9px;font-size:12px;color:#a0a0a0;font-weight:400;">Daily</div>
<div class="t" style="right:736.0px;top:909.5px;font-size:15.4px;color:#222;font-weight:400;transform:scaleX(0.94);transform-origin:100% 0">0.00 GBP</div>
<div class="t" style="right:562.0px;top:909.5px;font-size:15.4px;color:#222;font-weight:400;transform:scaleX(0.94);transform-origin:100% 0">0.00 GBP</div>
<div class="t" style="right:387.5px;top:909.5px;font-size:15.4px;color:#222;font-weight:400;transform:scaleX(0.94);transform-origin:100% 0">0.00 GBP</div>
<div class="t" style="right:213.0px;top:909.5px;font-size:15.4px;color:#222;font-weight:400;transform:scaleX(0.94);transform-origin:100% 0">0</div>
<div class="t" style="right:73.0px;top:909.5px;font-size:15.4px;color:#222;font-weight:400;transform:scaleX(0.94);transform-origin:100% 0">0</div>
<div class="ab" style="left:59.0px;top:957.7px;width:2042.0px;height:1.0px;background:#e8eaea;border-radius:0px;"></div>
<svg class="ab" style="left:77.0px;top:969.7px;" width="15" height="15" viewBox="0 0 15 15"><rect width="15" height="15" rx="2" fill="#1a1a1a"/><path d="M3.1 7.7L7 11.5L12.2 4.2" fill="none" stroke="#fff" stroke-width="1.6"/></svg>
<svg class="ab" style="left:112.5px;top:968.4px;" width="33" height="19" viewBox="0 0 33 19"><rect x="0.5" y="0.8" width="31.5" height="17.4" rx="8.7" fill="#1c1c1c"/><circle cx="23.4" cy="9.5" r="7.85" fill="#fff" stroke="#1c1c1c" stroke-width="1.1"/><path d="M19.6 9.9L22.5 12L27.2 6.9" fill="none" stroke="#1c1c1c" stroke-width="1.3"/></svg>
<div class="t" style="left:170.5px;top:969.9px;font-size:15.8px;color:#161616;font-weight:400;">Ad Goup 09</div>
<div class="ab" style="left:451.8px;top:972.7px;width:9.0px;height:9.0px;background:#c4c4c4;border-radius:5px;"></div>
<div class="t" style="left:469.8px;top:970.0px;font-size:15.4px;color:#333;font-weight:400;transform:scaleX(0.955);transform-origin:0 0">Inactive</div>
<div class="t" style="left:470.0px;top:992.8px;font-size:12.6px;color:#a8a8a8;font-weight:400;">Campaign inactive</div>
<div class="ab" style="left:659.5px;top:986.0px;width:5.0px;height:2.0px;background:#111;border-radius:0px;"></div>
<div class="t" style="right:945.4px;top:969.4px;font-size:15.4px;color:#222;font-weight:400;transform:scaleX(0.94);transform-origin:100% 0">300.00 GBP</div>
<div class="t" style="right:945.4px;top:992.8px;font-size:12px;color:#a0a0a0;font-weight:400;">Daily</div>
<div class="t" style="right:736.0px;top:969.4px;font-size:15.4px;color:#222;font-weight:400;transform:scaleX(0.94);transform-origin:100% 0">0.00 GBP</div>
<div class="t" style="right:562.0px;top:969.4px;font-size:15.4px;color:#222;font-weight:400;transform:scaleX(0.94);transform-origin:100% 0">0.00 GBP</div>
<div class="t" style="right:387.5px;top:969.4px;font-size:15.4px;color:#222;font-weight:400;transform:scaleX(0.94);transform-origin:100% 0">0.00 GBP</div>
<div class="t" style="right:213.0px;top:969.4px;font-size:15.4px;color:#222;font-weight:400;transform:scaleX(0.94);transform-origin:100% 0">0</div>
<div class="t" style="right:73.0px;top:969.4px;font-size:15.4px;color:#222;font-weight:400;transform:scaleX(0.94);transform-origin:100% 0">0</div>
<div class="ab" style="left:59.0px;top:1017.6px;width:2042.0px;height:1.0px;background:#e8eaea;border-radius:0px;"></div>
<svg class="ab" style="left:77.0px;top:1029.6px;" width="15" height="15" viewBox="0 0 15 15"><rect width="15" height="15" rx="2" fill="#1a1a1a"/><path d="M3.1 7.7L7 11.5L12.2 4.2" fill="none" stroke="#fff" stroke-width="1.6"/></svg>
<svg class="ab" style="left:112.5px;top:1028.3px;" width="33" height="19" viewBox="0 0 33 19"><rect x="0.5" y="0.8" width="31.5" height="17.4" rx="8.7" fill="#1c1c1c"/><circle cx="23.4" cy="9.5" r="7.85" fill="#fff" stroke="#1c1c1c" stroke-width="1.1"/><path d="M19.6 9.9L22.5 12L27.2 6.9" fill="none" stroke="#1c1c1c" stroke-width="1.3"/></svg>
<div class="t" style="left:170.5px;top:1029.5px;font-size:15.8px;color:#161616;font-weight:400;">Ad Goup 10</div>
<div class="ab" style="left:451.8px;top:1032.6px;width:9.0px;height:9.0px;background:#c4c4c4;border-radius:5px;"></div>
<div class="t" style="left:469.8px;top:1029.9px;font-size:15.4px;color:#333;font-weight:400;transform:scaleX(0.955);transform-origin:0 0">Inactive</div>
<div class="t" style="left:470.0px;top:1052.7px;font-size:12.6px;color:#a8a8a8;font-weight:400;">Campaign inactive</div>
<div class="ab" style="left:659.5px;top:1045.3px;width:5.0px;height:2.0px;background:#111;border-radius:0px;"></div>
<div class="t" style="right:945.4px;top:1029.3px;font-size:15.4px;color:#222;font-weight:400;transform:scaleX(0.94);transform-origin:100% 0">All</div>
<div class="t" style="right:736.0px;top:1029.3px;font-size:15.4px;color:#222;font-weight:400;transform:scaleX(0.94);transform-origin:100% 0">0.00 GBP</div>
<div class="t" style="right:562.0px;top:1029.3px;font-size:15.4px;color:#222;font-weight:400;transform:scaleX(0.94);transform-origin:100% 0">0.00 GBP</div>
<div class="t" style="right:387.5px;top:1029.3px;font-size:15.4px;color:#222;font-weight:400;transform:scaleX(0.94);transform-origin:100% 0">0.00 GBP</div>
<div class="t" style="right:213.0px;top:1029.3px;font-size:15.4px;color:#222;font-weight:400;transform:scaleX(0.94);transform-origin:100% 0">0</div>
<div class="t" style="right:73.0px;top:1029.3px;font-size:15.4px;color:#222;font-weight:400;transform:scaleX(0.94);transform-origin:100% 0">0</div>
<div class="ab" style="left:59.0px;top:1077.5px;width:2042.0px;height:1.0px;background:#e8eaea;border-radius:0px;"></div>
<svg class="ab" style="left:77.0px;top:1089.5px;" width="15" height="15" viewBox="0 0 15 15"><rect width="15" height="15" rx="2" fill="#1a1a1a"/><path d="M3.1 7.7L7 11.5L12.2 4.2" fill="none" stroke="#fff" stroke-width="1.6"/></svg>
<svg class="ab" style="left:112.5px;top:1088.2px;" width="33" height="19" viewBox="0 0 33 19"><rect x="0.5" y="0.8" width="31.5" height="17.4" rx="8.7" fill="#1c1c1c"/><circle cx="23.4" cy="9.5" r="7.85" fill="#fff" stroke="#1c1c1c" stroke-width="1.1"/><path d="M19.6 9.9L22.5 12L27.2 6.9" fill="none" stroke="#1c1c1c" stroke-width="1.3"/></svg>
<div class="t" style="left:170.5px;top:1090.4px;font-size:15.8px;color:#161616;font-weight:400;">Ad Goup 11</div>
<div class="ab" style="left:451.8px;top:1092.5px;width:9.0px;height:9.0px;background:#c4c4c4;border-radius:5px;"></div>
<div class="t" style="left:469.8px;top:1089.8px;font-size:15.4px;color:#333;font-weight:400;transform:scaleX(0.955);transform-origin:0 0">Inactive</div>
<div class="t" style="left:470.0px;top:1112.6px;font-size:12.6px;color:#a8a8a8;font-weight:400;">Campaign inactive</div>
<div class="ab" style="left:659.5px;top:1106.5px;width:5.0px;height:2.0px;background:#111;border-radius:0px;"></div>
<div class="t" style="right:945.4px;top:1089.2px;font-size:15.4px;color:#222;font-weight:400;transform:scaleX(0.94);transform-origin:100% 0">70.00 GBP</div>
<div class="t" style="right:945.4px;top:1112.6px;font-size:12px;color:#a0a0a0;font-weight:400;">Daily</div>
<div class="t" style="right:736.0px;top:1089.2px;font-size:15.4px;color:#222;font-weight:400;transform:scaleX(0.94);transform-origin:100% 0">0.00 GBP</div>
<div class="t" style="right:562.0px;top:1089.2px;font-size:15.4px;color:#222;font-weight:400;transform:scaleX(0.94);transform-origin:100% 0">0.00 GBP</div>
<div class="t" style="right:387.5px;top:1089.2px;font-size:15.4px;color:#222;font-weight:400;transform:scaleX(0.94);transform-origin:100% 0">0.00 GBP</div>
<div class="t" style="right:213.0px;top:1089.2px;font-size:15.4px;color:#222;font-weight:400;transform:scaleX(0.94);transform-origin:100% 0">0</div>
<div class="t" style="right:73.0px;top:1089.2px;font-size:15.4px;color:#222;font-weight:400;transform:scaleX(0.94);transform-origin:100% 0">0</div>
<div class="ab" style="left:59.0px;top:1137.4px;width:2042.0px;height:1.0px;background:#e8eaea;border-radius:0px;"></div>
<svg class="ab" style="left:77.0px;top:1149.4px;" width="15" height="15" viewBox="0 0 15 15"><rect width="15" height="15" rx="2" fill="#1a1a1a"/><path d="M3.1 7.7L7 11.5L12.2 4.2" fill="none" stroke="#fff" stroke-width="1.6"/></svg>
<svg class="ab" style="left:112.5px;top:1148.1px;" width="33" height="19" viewBox="0 0 33 19"><rect x="0.5" y="0.8" width="31.5" height="17.4" rx="8.7" fill="#1c1c1c"/><circle cx="23.4" cy="9.5" r="7.85" fill="#fff" stroke="#1c1c1c" stroke-width="1.1"/><path d="M19.6 9.9L22.5 12L27.2 6.9" fill="none" stroke="#1c1c1c" stroke-width="1.3"/></svg>
<div class="t" style="left:170.5px;top:1150.4px;font-size:15.8px;color:#161616;font-weight:400;">Ad Goup 12</div>
<div class="ab" style="left:451.8px;top:1152.4px;width:9.0px;height:9.0px;background:#c4c4c4;border-radius:5px;"></div>
<div class="t" style="left:469.8px;top:1149.7px;font-size:15.4px;color:#333;font-weight:400;transform:scaleX(0.955);transform-origin:0 0">Inactive</div>
<div class="t" style="left:470.0px;top:1172.5px;font-size:12.6px;color:#a8a8a8;font-weight:400;">Campaign inactive</div>
<div class="ab" style="left:659.5px;top:1165.6px;width:5.0px;height:2.0px;background:#111;border-radius:0px;"></div>
<div class="t" style="right:945.4px;top:1149.1px;font-size:15.4px;color:#222;font-weight:400;transform:scaleX(0.94);transform-origin:100% 0">100.00 GBP</div>
<div class="t" style="right:945.4px;top:1172.5px;font-size:12px;color:#a0a0a0;font-weight:400;">Daily</div>
<div class="t" style="right:736.0px;top:1149.1px;font-size:15.4px;color:#222;font-weight:400;transform:scaleX(0.94);transform-origin:100% 0">0.00 GBP</div>
<div class="t" style="right:562.0px;top:1149.1px;font-size:15.4px;color:#222;font-weight:400;transform:scaleX(0.94);transform-origin:100% 0">0.00 GBP</div>
<div class="t" style="right:387.5px;top:1149.1px;font-size:15.4px;color:#222;font-weight:400;transform:scaleX(0.94);transform-origin:100% 0">0.00 GBP</div>
<div class="t" style="right:213.0px;top:1149.1px;font-size:15.4px;color:#222;font-weight:400;transform:scaleX(0.94);transform-origin:100% 0">0</div>
<div class="t" style="right:73.0px;top:1149.1px;font-size:15.4px;color:#222;font-weight:400;transform:scaleX(0.94);transform-origin:100% 0">0</div>
<div class="ab" style="left:59.0px;top:1197.3px;width:2042.0px;height:1.0px;background:#e8eaea;border-radius:0px;"></div>
<svg class="ab" style="left:77.0px;top:1209.3px;" width="15" height="15" viewBox="0 0 15 15"><rect width="15" height="15" rx="2" fill="#1a1a1a"/><path d="M3.1 7.7L7 11.5L12.2 4.2" fill="none" stroke="#fff" stroke-width="1.6"/></svg>
<svg class="ab" style="left:112.5px;top:1208.0px;" width="33" height="19" viewBox="0 0 33 19"><rect x="0.5" y="0.8" width="31.5" height="17.4" rx="8.7" fill="#1c1c1c"/><circle cx="23.4" cy="9.5" r="7.85" fill="#fff" stroke="#1c1c1c" stroke-width="1.1"/><path d="M19.6 9.9L22.5 12L27.2 6.9" fill="none" stroke="#1c1c1c" stroke-width="1.3"/></svg>
<div class="t" style="left:170.5px;top:1210.1px;font-size:15.8px;color:#161616;font-weight:400;">Ad Goup 13</div>
<div class="ab" style="left:451.8px;top:1212.3px;width:9.0px;height:9.0px;background:#c4c4c4;border-radius:5px;"></div>
<div class="t" style="left:469.8px;top:1209.6px;font-size:15.4px;color:#333;font-weight:400;transform:scaleX(0.955);transform-origin:0 0">Inactive</div>
<div class="t" style="left:470.0px;top:1232.4px;font-size:12.6px;color:#a8a8a8;font-weight:400;">Campaign inactive</div>
<div class="ab" style="left:659.5px;top:1226.0px;width:5.0px;height:2.0px;background:#111;border-radius:0px;"></div>
<div class="t" style="right:945.4px;top:1209.0px;font-size:15.4px;color:#222;font-weight:400;transform:scaleX(0.94);transform-origin:100% 0">200.00 GBP</div>
<div class="t" style="right:945.4px;top:1232.4px;font-size:12px;color:#a0a0a0;font-weight:400;">Daily</div>
<div class="t" style="right:736.0px;top:1209.0px;font-size:15.4px;color:#222;font-weight:400;transform:scaleX(0.94);transform-origin:100% 0">0.00 GBP</div>
<div class="t" style="right:562.0px;top:1209.0px;font-size:15.4px;color:#222;font-weight:400;transform:scaleX(0.94);transform-origin:100% 0">0.00 GBP</div>
<div class="t" style="right:387.5px;top:1209.0px;font-size:15.4px;color:#222;font-weight:400;transform:scaleX(0.94);transform-origin:100% 0">0.00 GBP</div>
<div class="t" style="right:213.0px;top:1209.0px;font-size:15.4px;color:#222;font-weight:400;transform:scaleX(0.94);transform-origin:100% 0">0</div>
<div class="t" style="right:73.0px;top:1209.0px;font-size:15.4px;color:#222;font-weight:400;transform:scaleX(0.94);transform-origin:100% 0">0</div>
<div class="ab" style="left:59.0px;top:1257.2px;width:2042.0px;height:1.0px;background:#e8eaea;border-radius:0px;"></div>
<svg class="ab" style="left:77.0px;top:1269.2px;" width="15" height="15" viewBox="0 0 15 15"><rect width="15" height="15" rx="2" fill="#1a1a1a"/><path d="M3.1 7.7L7 11.5L12.2 4.2" fill="none" stroke="#fff" stroke-width="1.6"/></svg>
<svg class="ab" style="left:112.5px;top:1267.9px;" width="33" height="19" viewBox="0 0 33 19"><rect x="0.5" y="0.8" width="31.5" height="17.4" rx="8.7" fill="#1c1c1c"/><circle cx="23.4" cy="9.5" r="7.85" fill="#fff" stroke="#1c1c1c" stroke-width="1.1"/><path d="M19.6 9.9L22.5 12L27.2 6.9" fill="none" stroke="#1c1c1c" stroke-width="1.3"/></svg>
<div class="t" style="left:170.5px;top:1270.3px;font-size:15.8px;color:#161616;font-weight:400;">Ad Goup 14</div>
<div class="ab" style="left:451.8px;top:1272.2px;width:9.0px;height:9.0px;background:#c4c4c4;border-radius:5px;"></div>
<div class="t" style="left:469.8px;top:1269.5px;font-size:15.4px;color:#333;font-weight:400;transform:scaleX(0.955);transform-origin:0 0">Inactive</div>
<div class="t" style="left:470.0px;top:1292.3px;font-size:12.6px;color:#a8a8a8;font-weight:400;">Campaign inactive</div>
<div class="ab" style="left:659.5px;top:1285.8px;width:5.0px;height:2.0px;background:#111;border-radius:0px;"></div>
<div class="t" style="right:945.4px;top:1268.9px;font-size:15.4px;color:#222;font-weight:400;transform:scaleX(0.94);transform-origin:100% 0">300.00 GBP</div>
<div class="t" style="right:945.4px;top:1292.3px;font-size:12px;color:#a0a0a0;font-weight:400;">Daily</div>
<div class="t" style="right:736.0px;top:1268.9px;font-size:15.4px;color:#222;font-weight:400;transform:scaleX(0.94);transform-origin:100% 0">0.00 GBP</div>
<div class="t" style="right:562.0px;top:1268.9px;font-size:15.4px;color:#222;font-weight:400;transform:scaleX(0.94);transform-origin:100% 0">0.00 GBP</div>
<div class="t" style="right:387.5px;top:1268.9px;font-size:15.4px;color:#222;font-weight:400;transform:scaleX(0.94);transform-origin:100% 0">0.00 GBP</div>
<div class="t" style="right:213.0px;top:1268.9px;font-size:15.4px;color:#222;font-weight:400;transform:scaleX(0.94);transform-origin:100% 0">0</div>
<div class="t" style="right:73.0px;top:1268.9px;font-size:15.4px;color:#222;font-weight:400;transform:scaleX(0.94);transform-origin:100% 0">0</div>
<div class="ab" style="left:59.0px;top:1317.1px;width:2042.0px;height:1.0px;background:#e8eaea;border-radius:0px;"></div>
<svg class="ab" style="left:77.0px;top:1329.1px;" width="15" height="15" viewBox="0 0 15 15"><rect width="15" height="15" rx="2" fill="#1a1a1a"/><path d="M3.1 7.7L7 11.5L12.2 4.2" fill="none" stroke="#fff" stroke-width="1.6"/></svg>
<svg class="ab" style="left:112.5px;top:1327.8px;" width="33" height="19" viewBox="0 0 33 19"><rect x="0.5" y="0.8" width="31.5" height="17.4" rx="8.7" fill="#1c1c1c"/><circle cx="23.4" cy="9.5" r="7.85" fill="#fff" stroke="#1c1c1c" stroke-width="1.1"/><path d="M19.6 9.9L22.5 12L27.2 6.9" fill="none" stroke="#1c1c1c" stroke-width="1.3"/></svg>
<div class="t" style="left:170.5px;top:1329.5px;font-size:15.8px;color:#161616;font-weight:400;">Ad Goup 15</div>
<div class="ab" style="left:451.8px;top:1332.1px;width:9.0px;height:9.0px;background:#c4c4c4;border-radius:5px;"></div>
<div class="t" style="left:469.8px;top:1329.4px;font-size:15.4px;color:#333;font-weight:400;transform:scaleX(0.955);transform-origin:0 0">Inactive</div>
<div class="t" style="left:470.0px;top:1352.2px;font-size:12.6px;color:#a8a8a8;font-weight:400;">Campaign inactive</div>
<div class="ab" style="left:659.5px;top:1336.1px;width:5.0px;height:2.0px;background:#111;border-radius:0px;"></div>
<div class="t" style="right:945.4px;top:1328.8px;font-size:15.4px;color:#222;font-weight:400;transform:scaleX(0.94);transform-origin:100% 0">300.00 GBP</div>
<div class="t" style="right:945.4px;top:1352.2px;font-size:12px;color:#a0a0a0;font-weight:400;">Daily</div>
<div class="t" style="right:736.0px;top:1328.8px;font-size:15.4px;color:#222;font-weight:400;transform:scaleX(0.94);transform-origin:100% 0">0.00 GBP</div>
<div class="t" style="right:562.0px;top:1328.8px;font-size:15.4px;color:#222;font-weight:400;transform:scaleX(0.94);transform-origin:100% 0">0.00 GBP</div>
<div class="t" style="right:387.5px;top:1328.8px;font-size:15.4px;color:#222;font-weight:400;transform:scaleX(0.94);transform-origin:100% 0">0.00 GBP</div>
<div class="t" style="right:213.0px;top:1328.8px;font-size:15.4px;color:#222;font-weight:400;transform:scaleX(0.94);transform-origin:100% 0">0</div>
<div class="t" style="right:73.0px;top:1328.8px;font-size:15.4px;color:#222;font-weight:400;transform:scaleX(0.94);transform-origin:100% 0">0</div>
<div class="ab" style="left:168.0px;top:494.0px;width:1.2px;height:3.0px;background:#555;border-radius:0px;"></div>
<div class="ab" style="left:168.5px;top:614.3px;width:1.0px;height:1.5px;background:#888;border-radius:0px;"></div>
<div class="ab" style="left:168.5px;top:674.2px;width:1.0px;height:1.5px;background:#888;border-radius:0px;"></div>
<div class="ab" style="left:59.0px;top:1355.0px;width:2042.0px;height:62.5px;background:#ffffff;border-radius:0px;"></div>
<div class="ab" style="left:59.0px;top:1358.5px;width:2042.0px;height:1.0px;background:#e6e8e8;border-radius:0px;"></div>
<div class="ab" style="left:59.0px;top:1417.5px;width:2042.0px;height:1.0px;background:#e6e8e8;border-radius:0px;"></div>
<div class="t" style="left:77.5px;top:1380.4px;font-size:15.8px;color:#161616;font-weight:400;">Total of 34 Ad Group(s)</div>
<svg class="ab" style="left:248.0px;top:1381.5px;" width="15" height="15" viewBox="0 0 15 15"><circle cx="7.5" cy="7.5" r="7.3" fill="#cfcfcf"/><path d="M5.4 5.8A2.1 2.1 0 1 1 8.3 7.8C7.6 8.2 7.5 8.6 7.5 9.3" stroke="#fff" stroke-width="1.5" fill="none"/><circle cx="7.5" cy="11.4" r="0.9" fill="#fff"/></svg>
<div class="ab" style="left:452.5px;top:1388.0px;width:4.0px;height:1.5px;background:#333;border-radius:0px;"></div>
<div class="ab" style="left:1210.5px;top:1388.0px;width:4.0px;height:1.5px;background:#333;border-radius:0px;"></div>
<div class="t" style="right:736.0px;top:1379.9px;font-size:15.4px;color:#222;font-weight:400;transform:scaleX(0.94);transform-origin:100% 0">4,893.91 GBP</div>
<div class="t" style="right:562.0px;top:1379.9px;font-size:15.4px;color:#222;font-weight:400;transform:scaleX(0.94);transform-origin:100% 0">0.80 GBP</div>
<div class="t" style="right:387.5px;top:1379.9px;font-size:15.4px;color:#222;font-weight:400;transform:scaleX(0.94);transform-origin:100% 0">1.87 GBP</div>
<div class="t" style="right:213.0px;top:1379.9px;font-size:15.4px;color:#222;font-weight:400;transform:scaleX(0.94);transform-origin:100% 0">2,613,339</div>
<div class="t" style="right:73.0px;top:1379.9px;font-size:15.4px;color:#222;font-weight:400;transform:scaleX(0.94);transform-origin:100% 0">6,125</div>
<div class="ab" style="left:437.5px;top:419.7px;width:263.5px;height:120.0px;background:#ffffff;border-radius:0px;border-radius:2px 2px 6px 6px;box-shadow:0 3px 10px rgba(0,0,0,0.10)"></div>
<div class="ab" style="left:437.5px;top:429.0px;width:263.5px;height:32.8px;background:#e4e5e5;border-radius:0px;"></div>
<div class="t" style="left:451.7px;top:439.6px;font-size:12.8px;color:#333;font-weight:400;">Create new rule</div>
<div class="t" style="left:451.0px;top:475.5px;font-size:12.8px;color:#222;font-weight:400;">Apply existing rule</div>
<div class="t" style="left:451.0px;top:510.1px;font-size:12.8px;color:#222;font-weight:400;">Manage rules</div>
<div class="ab" style="left:56px;top:426px;width:57px;height:935px;border:5px solid #f72868;border-radius:13px"></div>
<svg class="ab" style="left:140.0px;top:825.0px;" width="140" height="108" viewBox="0 0 140 108"><path d="M60.6 6.5Q60.6 3.5 58.5 5.6L8.5 51Q6 53 8.5 55L58.5 100.4Q60.6 102.5 60.6 99.5V76.4H131Q132.6 76.4 132.6 74.8V30.3Q132.6 28.7 131 28.7H60.6Z" fill="#ff0050"/></svg>
</div></div>
</body></html>
